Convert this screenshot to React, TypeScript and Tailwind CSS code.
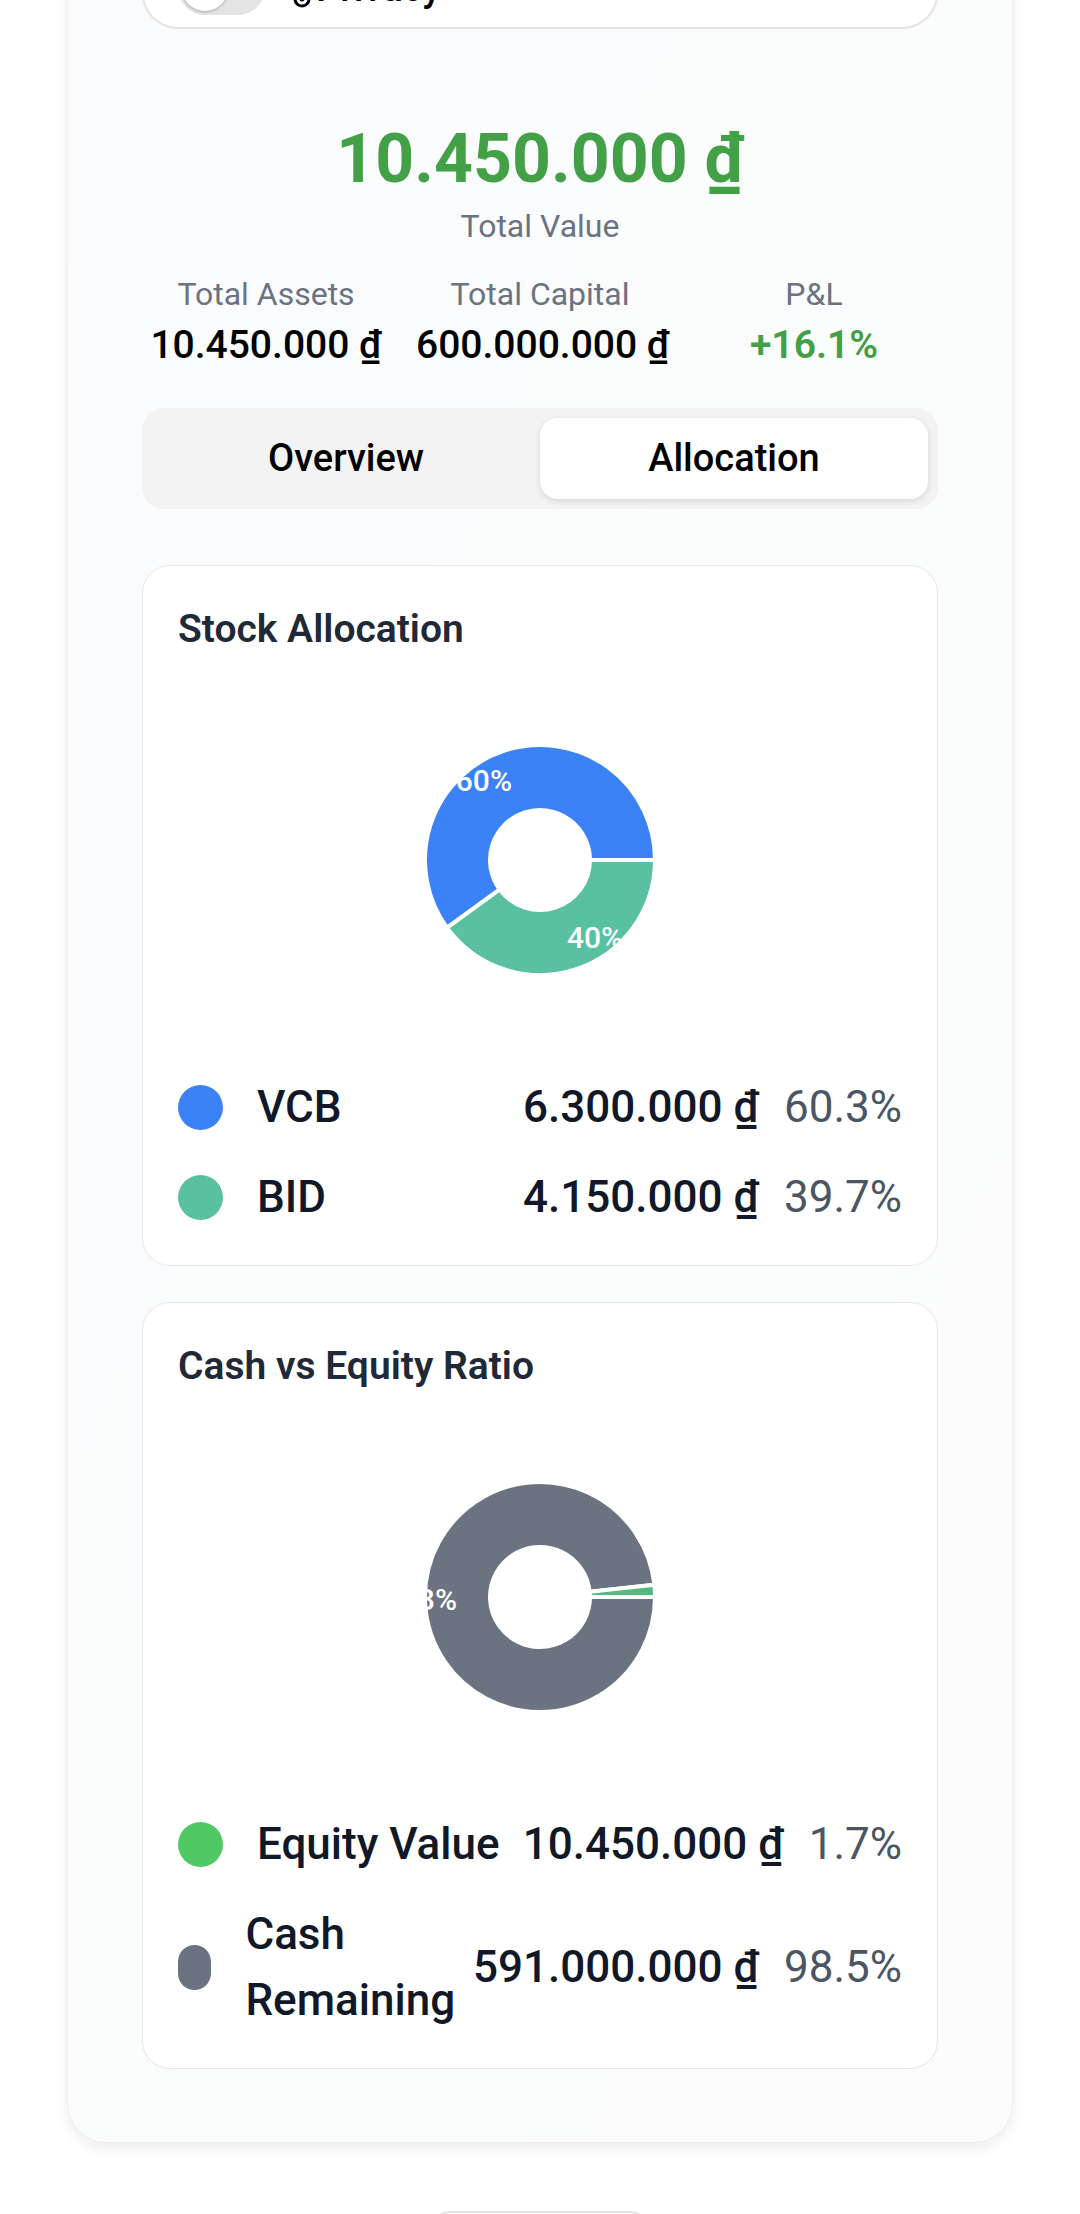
import { useMemo } from "react";

interface Slice {
    color: string;
    from: number;
    to: number;
}

interface ChartLabel {
    text: string;
    x: number;
    y: number;
    anchor: "start" | "end";
}

interface LegendItem {
    dot: string;
    name: string;
    value: string;
    pct: string;
}

// angles in degrees, clockwise from 3 o'clock (screen coords)
function sectorPath(cx: number, cy: number, r0: number, r1: number, a0: number, a1: number) {
    const rad = (a: number) => (a * Math.PI) / 180;
    const pt = (r: number, a: number) => [cx + r * Math.cos(rad(a)), cy + r * Math.sin(rad(a))];
    const large = a1 - a0 > 180 ? 1 : 0;
    const [x0, y0] = pt(r1, a0);
    const [x1, y1] = pt(r1, a1);
    const [x2, y2] = pt(r0, a1);
    const [x3, y3] = pt(r0, a0);
    return `M${x0} ${y0} A${r1} ${r1} 0 ${large} 1 ${x1} ${y1} L${x2} ${y2} A${r0} ${r0} 0 ${large} 0 ${x3} ${y3} Z`;
}

function Donut({ slices, labels }: { slices: Slice[]; labels: ChartLabel[] }) {
    const paths = useMemo(() => slices.map(s => sectorPath(163, 163, 50, 115, s.from, s.to)), [slices]);
    return (
        <svg width={326} height={326} viewBox="0 0 326 326">
            {paths.map((d, i) => (
                <path key={i} d={d} fill={slices[i].color} stroke="#ffffff" strokeWidth={4} strokeLinejoin="miter" />
            ))}
            {labels.map(l => (
                <text key={l.text} x={l.x} y={l.y} textAnchor={l.anchor} fill="#ffffff" fontSize={30} fontWeight={500} fontFamily="Roboto, sans-serif">
                    {l.text}
                </text>
            ))}
        </svg>
    );
}

function LegendRow({ item }: { item: LegendItem }) {
    return (
        <div className="flex items-center">
            <div className={`w-[45px] h-[45px] rounded-full ${item.dot}`} />
            <div className="flex-1 ml-[34px] text-[44px] leading-[66px] font-medium text-[#111827]">{item.name}</div>
            <div className="ml-[18px] shrink-0 whitespace-nowrap text-[44px] leading-[66px] font-medium text-[#111827]">{item.value}</div>
            <div className="ml-[25px] shrink-0 whitespace-nowrap text-[44px] leading-[66px] text-[#4b5563]">{item.pct}</div>
        </div>
    );
}

function ChartCard({ title, slices, labels, legend }: { title: string; slices: Slice[]; labels: ChartLabel[]; legend: LegendItem[] }) {
    return (
        <div className="rounded-[28px] border border-[#e5e7eb] bg-white p-[35px]">
            <h2 className="text-[39px] leading-[56px] font-semibold text-[#1f2937]">{title}</h2>
            <div className="flex justify-center mt-[40px] mb-[51px]">
                <Donut slices={slices} labels={labels} />
            </div>
            <div className="flex flex-col gap-[24px]">
                {legend.map(item => <LegendRow key={item.name} item={item} />)}
            </div>
        </div>
    );
}

const stockSlices: Slice[] = [
    { color: "#59c1a2", from: 0, to: 144 },
    { color: "#3b82f6", from: 144, to: 360 },
];

const cashSlices: Slice[] = [
    { color: "#6b7280", from: 0, to: 353.9 },
    { color: "#55b97f", from: 353.9, to: 360 },
];

export default function App() {
    return (
        <div className="w-[1080px] h-[2214px] overflow-hidden bg-white font-[family-name:Roboto,sans-serif]">
            <div className="-mt-[128px]">
                <div className="w-[946px] mx-auto rounded-[40px] border border-[#eceef1] bg-gradient-to-br from-[#fafbfd] to-[#fbfcfb] px-[74px] pt-[74px] pb-[73px] shadow-[0_6px_14px_rgba(0,0,0,0.07)]">
                    {/* privacy switch (scrolled mostly out of view) */}
                    <div className="h-[82px] rounded-[36px] border-2 border-[#e4e4e4] bg-white flex items-center pl-[34px]">
                        <div className="w-[87px] h-[54px] rounded-full bg-[#e4e4e4] p-[4px] flex items-center">
                            <div className="w-[46px] h-[46px] rounded-full bg-white shadow-[0_1px_3px_rgba(0,0,0,0.25)]" />
                        </div>
                        <div className="ml-[28px] flex items-center gap-[5px] text-[38px] font-medium text-black">
                            <svg width={18} height={18} viewBox="0 0 18 18" className="mt-[22px]">
                                <circle cx={9} cy={9} r={7} fill="none" stroke="#000" strokeWidth={3} />
                                <circle cx={9} cy={9} r={2.5} fill="#000" />
                            </svg>
                            <span>Privacy</span>
                        </div>
                    </div>

                    <div className="mt-[88px] text-center text-[68px] leading-[84px] font-bold text-[#43a047]">10.450.000 ₫</div>
                    <div className="mt-[1px] text-center text-[32px] leading-[48px] text-[#6b7280]">Total Value</div>

                    <div className="mt-[20px] grid grid-cols-3 gap-x-[26px] text-center">
                        <div>
                            <div className="text-[32px] leading-[48px] text-[#6b7280]">Total Assets</div>
                            <div className="text-[39px] leading-[54px] font-medium text-black whitespace-nowrap">10.450.000 ₫</div>
                        </div>
                        <div>
                            <div className="text-[32px] leading-[48px] text-[#6b7280]">Total Capital</div>
                            <div className="text-[39px] leading-[54px] font-medium text-black whitespace-nowrap">600.000.000 ₫</div>
                        </div>
                        <div>
                            <div className="text-[32px] leading-[48px] text-[#6b7280]">P&amp;L</div>
                            <div className="text-[39px] leading-[54px] font-semibold text-[#43a047]">+16.1%</div>
                        </div>
                    </div>

                    <div className="mt-[36px] flex rounded-[22px] bg-[#f3f3f3] p-[10px]">
                        <div className="flex-1 h-[81px] flex items-center justify-center text-[38px] font-medium text-black">Overview</div>
                        <div className="flex-1 h-[81px] flex items-center justify-center rounded-[18px] bg-white text-[38px] font-medium text-black shadow-[0_2px_6px_rgba(0,0,0,0.12)]">Allocation</div>
                    </div>

                    <div className="mt-[56px]">
                        <ChartCard
                            title="Stock Allocation"
                            slices={stockSlices}
                            labels={[
                                { text: "60%", x: 135, y: 94, anchor: "end" },
                                { text: "40%", x: 190, y: 251, anchor: "start" },
                            ]}
                            legend={[
                                { dot: "bg-[#3b82f6]", name: "VCB", value: "6.300.000 ₫", pct: "60.3%" },
                                { dot: "bg-[#59c1a2]", name: "BID", value: "4.150.000 ₫", pct: "39.7%" },
                            ]}
                        />
                    </div>

                    <div className="mt-[36px]">
                        <ChartCard
                            title="Cash vs Equity Ratio"
                            slices={cashSlices}
                            labels={[{ text: "98%", x: 80, y: 176, anchor: "end" }]}
                            legend={[
                                { dot: "bg-[#50c864]", name: "Equity Value", value: "10.450.000 ₫", pct: "1.7%" },
                                { dot: "bg-[#6b7280]", name: "Cash Remaining", value: "591.000.000 ₫", pct: "98.5%" },
                            ]}
                        />
                    </div>
                </div>

                <div className="mt-[68px] mx-auto w-[220px] h-[60px] rounded-[20px] border-2 border-[#e2e2e2] bg-white" />
            </div>
        </div>
    );
}
